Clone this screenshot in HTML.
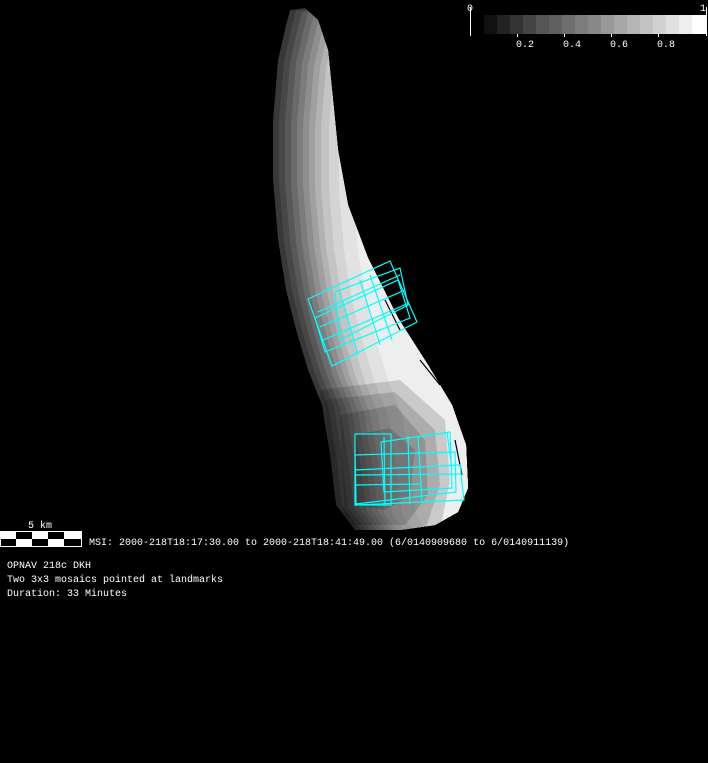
<!DOCTYPE html>
<html><head><style>
html,body{margin:0;padding:0;background:#000;width:708px;height:763px;overflow:hidden}
svg{position:absolute;left:0;top:0}
text{font-family:"Liberation Mono","DejaVu Sans Mono",monospace;font-size:10px;fill:#fff}
</style></head><body>
<svg width="708" height="763" viewBox="0 0 708 763">
<defs>
<path id="s" d="M290,10 L305,8 L318,20 L328,50 L333,100 L338,150 L348,205 L368,258 L398,318 L428,365 L452,405 L466,445 L468,488 L458,512 L435,525 L400,530 L355,530 L336,505 L330,455 L322,405 L308,370 L296,330 L286,290 L278,240 L273,180 L273,120 L278,60 L286,25 Z"/>
<clipPath id="c"><use href="#s"/></clipPath>
</defs>
<g clip-path="url(#c)">
<use href="#s" fill="#383838"/>
<use href="#s" fill="#474747" transform="translate(6,1)"/>
<use href="#s" fill="#585858" transform="translate(12,2)"/>
<use href="#s" fill="#6a6a6a" transform="translate(18,3)"/>
<use href="#s" fill="#7c7c7c" transform="translate(24,4)"/>
<use href="#s" fill="#8e8e8e" transform="translate(30,5)"/>
<use href="#s" fill="#a0a0a0" transform="translate(36,6)"/>
<use href="#s" fill="#b2b2b2" transform="translate(42,7)"/>
<use href="#s" fill="#c4c4c4" transform="translate(48,8)"/>
<use href="#s" fill="#d4d4d4" transform="translate(56,9)"/>
<use href="#s" fill="#e2e2e2" transform="translate(66,10)"/>
<use href="#s" fill="#eeeeee" transform="translate(80,10)"/>
<polygon points="320,390 400,380 445,420 450,480 440,530 330,535" fill="#000" opacity="0.15"/>
<polygon points="325,400 395,392 435,430 440,485 425,530 335,530" fill="#000" opacity="0.15"/>
<polygon points="340,415 395,405 425,440 428,495 405,525 345,525" fill="#000" opacity="0.15"/>
<polygon points="355,435 390,428 415,450 410,495 385,510 358,505" fill="#000" opacity="0.15"/>
</g>
<path d="M340,150 L350,205 M385,300 L400,330 M420,360 L440,385 M455,440 L462,475" stroke="#000" stroke-width="1.2" fill="none"/>
<g stroke="#00ffff" stroke-width="1.2" fill="none">
<polygon points="308,299 390,261 417,322 332,366"/>
<polygon points="335,292 400,268 408,305 340,340"/>
<polygon points="315,318 398,280 410,318 325,352"/>
<line x1="318" y1="312" x2="400" y2="275"/>
<line x1="320" y1="327" x2="405" y2="290"/>
<line x1="323" y1="340" x2="409" y2="303"/>
<line x1="360" y1="280" x2="380" y2="345"/>
<line x1="370" y1="275" x2="392" y2="340"/>
<line x1="340" y1="292" x2="358" y2="355"/>
<rect x="355" y="434" width="36" height="71"/>
<polygon points="381,442 450,432 452,488 384,492"/>
<polygon points="355,455 455,452 456,492 356,504"/>
<polygon points="355,470 460,465 464,500 356,505"/>
<line x1="355" y1="475" x2="460" y2="474"/>
<line x1="355" y1="485" x2="420" y2="484"/>
<line x1="384" y1="437" x2="385" y2="505"/>
<line x1="408" y1="436" x2="410" y2="504"/>
<line x1="418" y1="436" x2="422" y2="503"/>
<line x1="447" y1="432" x2="452" y2="470"/>
</g>
<g shape-rendering="crispEdges">
<rect x="470" y="7" width="1" height="29" fill="#fff"/>
<rect x="706" y="7" width="1" height="29" fill="#fff"/>
<rect x="484" y="15" width="13" height="19" fill="#111"/>
<rect x="497" y="15" width="13" height="19" fill="#222"/>
<rect x="510" y="15" width="13" height="19" fill="#333"/>
<rect x="523" y="15" width="13" height="19" fill="#444"/>
<rect x="536" y="15" width="13" height="19" fill="#555"/>
<rect x="549" y="15" width="13" height="19" fill="#5f5f5f"/>
<rect x="562" y="15" width="13" height="19" fill="#6e6e6e"/>
<rect x="575" y="15" width="13" height="19" fill="#7c7c7c"/>
<rect x="588" y="15" width="13" height="19" fill="#888"/>
<rect x="601" y="15" width="13" height="19" fill="#989898"/>
<rect x="614" y="15" width="13" height="19" fill="#a7a7a7"/>
<rect x="627" y="15" width="13" height="19" fill="#b5b5b5"/>
<rect x="640" y="15" width="13" height="19" fill="#c3c3c3"/>
<rect x="653" y="15" width="13" height="19" fill="#d1d1d1"/>
<rect x="666" y="15" width="13" height="19" fill="#e0e0e0"/>
<rect x="679" y="15" width="13" height="19" fill="#eeeeee"/>
<rect x="692" y="15" width="14" height="19" fill="#fff"/>
<rect x="517" y="34" width="1" height="3" fill="#fff"/>
<rect x="564" y="34" width="1" height="3" fill="#fff"/>
<rect x="611" y="34" width="1" height="3" fill="#fff"/>
<rect x="658" y="34" width="1" height="3" fill="#fff"/>
</g>
<text x="467" y="11">0</text>
<text x="700" y="11">1</text>
<text x="516" y="47">0.2</text>
<text x="563" y="47">0.4</text>
<text x="610" y="47">0.6</text>
<text x="657" y="47">0.8</text>
<g shape-rendering="crispEdges">
<rect x="0" y="531" width="82" height="16" fill="#fff"/>
<rect x="16" y="532" width="16" height="7" fill="#000"/>
<rect x="48" y="532" width="16" height="7" fill="#000"/>
<rect x="1" y="539" width="15" height="7" fill="#000"/>
<rect x="32" y="539" width="16" height="7" fill="#000"/>
<rect x="64" y="539" width="17" height="7" fill="#000"/>
</g>
<text x="28" y="528">5 km</text>
<text x="89" y="545">MSI:  2000-218T18:17:30.00 to 2000-218T18:41:49.00 (6/0140909680 to 6/0140911139)</text>
<text x="7" y="568">OPNAV 218c DKH</text>
<text x="7" y="582">Two 3x3 mosaics pointed at landmarks</text>
<text x="7" y="596">Duration: 33 Minutes</text>
</svg>
</body></html>
